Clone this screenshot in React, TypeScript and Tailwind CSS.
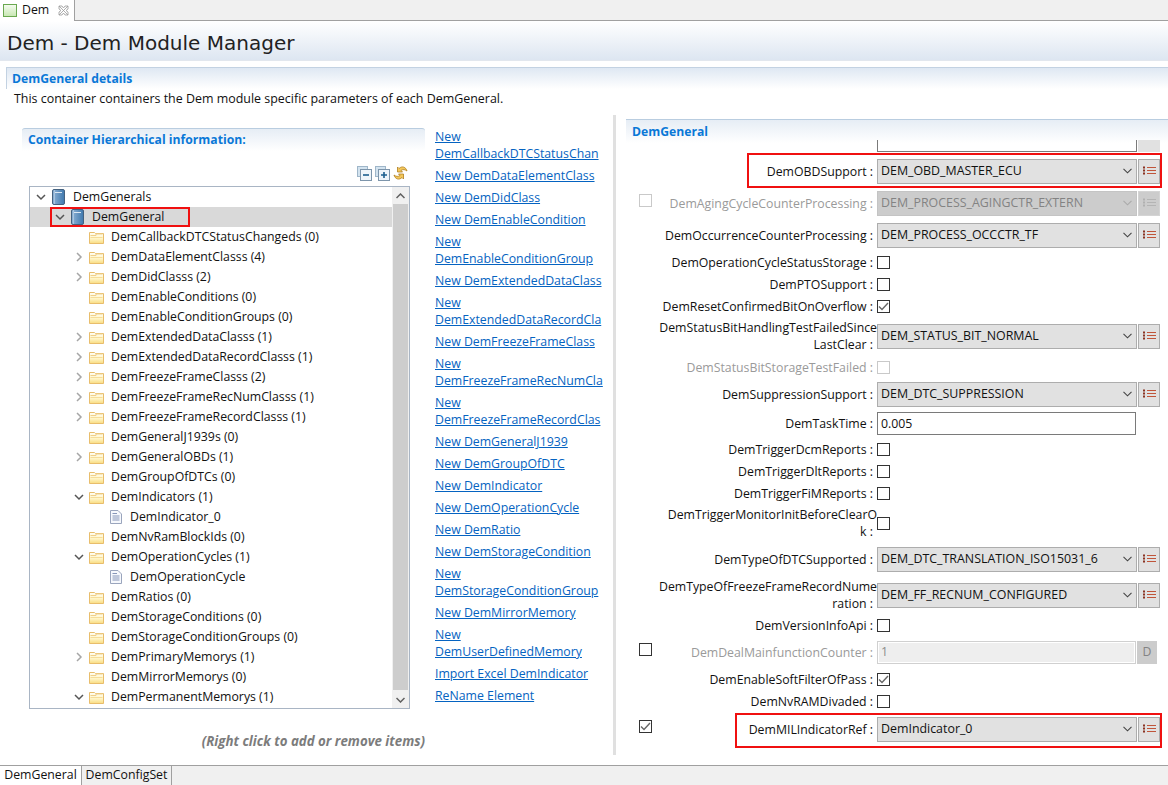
import React from "react";

const FONT = "font-['Open_Sans','Noto_Sans',sans-serif]";

const Chevron = ({ open }: { open: boolean }) => (
  <svg width="10" height="10" viewBox="0 0 10 10" className="shrink-0">
    {open ? (
      <path d="M1 3 L5 7 L9 3" fill="none" stroke="#555" strokeWidth="1.5" />
    ) : (
      <path d="M3 1 L7 5 L3 9" fill="none" stroke="#a6a6a6" strokeWidth="1.5" />
    )}
  </svg>
);

const Folder = () => (
  <svg width="15" height="13" viewBox="0 0 15 13" className="shrink-0">
    <defs>
      <linearGradient id="fg" x1="0" y1="0" x2="0" y2="1">
        <stop offset="0" stopColor="#fffef6" />
        <stop offset="0.55" stopColor="#fff5c8" />
        <stop offset="1" stopColor="#f9dc80" />
      </linearGradient>
    </defs>
    <path d="M0.5 12.5 V1.5 H5.5 L6.5 2.5 H14.5 V12.5 Z" fill="url(#fg)" stroke="#e8bd6c" />
    <path d="M1.5 4.5 H7 V3 H13.5" fill="none" stroke="#f0d08c" />
    <path d="M1.5 6.5 H13.5" stroke="#f6dd9a" />
  </svg>
);

const Book = () => (
  <svg width="13" height="16" viewBox="0 0 13 16" className="shrink-0">
    <defs>
      <linearGradient id="bk" x1="0" y1="0" x2="1" y2="0">
        <stop offset="0" stopColor="#8fb3d6" />
        <stop offset="1" stopColor="#3f78ad" />
      </linearGradient>
    </defs>
    <rect x="0.5" y="0.5" width="12" height="15" rx="1.5" fill="url(#bk)" stroke="#44617f" />
    <path d="M3 3.5 H10" stroke="#dce8f3" />
    <path d="M2.5 1 V15" stroke="#c4d8ea" strokeOpacity="0.6" />
  </svg>
);

const Doc = () => (
  <svg width="12" height="14" viewBox="0 0 12 14" className="shrink-0">
    <path d="M0.5 0.5 H8 L11.5 4 V13.5 H0.5 Z" fill="#f6f8fc" stroke="#9aa5bd" />
    <path d="M2.5 3.5 H7 M2.5 6 H9.5 M2.5 8 H9.5 M2.5 10 H9.5" stroke="#8796b8" />
  </svg>
);

const ListIcon = ({ dim }: { dim?: boolean }) => (
  <svg width="13" height="10" viewBox="0 0 13 10">
    <path d="M0 1.5 H2 M0 4.5 H2 M0 7.5 H2" stroke={dim ? "#b0b0b0" : "#8a3322"} strokeWidth="2" />
    <path d="M4 1.5 H13 M4 4.5 H13 M4 7.5 H13" stroke={dim ? "#b4b4b4" : "#c0553a"} strokeWidth="1" />
  </svg>
);

const ComboChevron = ({ dim }: { dim?: boolean }) => (
  <svg width="9" height="6" viewBox="0 0 9 6">
    <path d="M0.5 0.8 L4.5 4.8 L8.5 0.8" fill="none" stroke={dim ? "#aaa" : "#444"} strokeWidth="1.1" />
  </svg>
);

const Check = () => (
  <svg width="11" height="9" viewBox="0 0 11 9">
    <path d="M1 4.5 L4 7.5 L10 1" fill="none" stroke="#666" strokeWidth="1.4" />
  </svg>
);

const Box = ({ on, dim }: { on?: boolean; dim?: boolean }) => (
  <div
    className={`flex h-[13px] w-[13px] shrink-0 items-center justify-center border bg-white ${
      dim ? "border-[#c9c9c9]" : "border-[#333333]"
    }`}
  >
    {on && <Check />}
  </div>
);

type Tree = { t: string; lv: number; c?: "o" | "c"; k?: "f" | "b" | "d" };
const tree: Tree[] = [
  { t: "DemGenerals", lv: 0, c: "o", k: "b" },
  { t: "DemGeneral", lv: 1, c: "o", k: "b" },
  { t: "DemCallbackDTCStatusChangeds (0)", lv: 2 },
  { t: "DemDataElementClasss (4)", lv: 2, c: "c" },
  { t: "DemDidClasss (2)", lv: 2, c: "c" },
  { t: "DemEnableConditions (0)", lv: 2 },
  { t: "DemEnableConditionGroups (0)", lv: 2 },
  { t: "DemExtendedDataClasss (1)", lv: 2, c: "c" },
  { t: "DemExtendedDataRecordClasss (1)", lv: 2, c: "c" },
  { t: "DemFreezeFrameClasss (2)", lv: 2, c: "c" },
  { t: "DemFreezeFrameRecNumClasss (1)", lv: 2, c: "c" },
  { t: "DemFreezeFrameRecordClasss (1)", lv: 2, c: "c" },
  { t: "DemGeneralJ1939s (0)", lv: 2 },
  { t: "DemGeneralOBDs (1)", lv: 2, c: "c" },
  { t: "DemGroupOfDTCs (0)", lv: 2 },
  { t: "DemIndicators (1)", lv: 2, c: "o" },
  { t: "DemIndicator_0", lv: 3, k: "d" },
  { t: "DemNvRamBlockIds (0)", lv: 2 },
  { t: "DemOperationCycles (1)", lv: 2, c: "o" },
  { t: "DemOperationCycle", lv: 3, k: "d" },
  { t: "DemRatios (0)", lv: 2 },
  { t: "DemStorageConditions (0)", lv: 2 },
  { t: "DemStorageConditionGroups (0)", lv: 2 },
  { t: "DemPrimaryMemorys (1)", lv: 2, c: "c" },
  { t: "DemMirrorMemorys (0)", lv: 2 },
  { t: "DemPermanentMemorys (1)", lv: 2, c: "o" },
];

const links: string[][] = [
  ["New", "DemCallbackDTCStatusChan"],
  ["New DemDataElementClass"],
  ["New DemDidClass"],
  ["New DemEnableCondition"],
  ["New", "DemEnableConditionGroup"],
  ["New DemExtendedDataClass"],
  ["New", "DemExtendedDataRecordCla"],
  ["New DemFreezeFrameClass"],
  ["New", "DemFreezeFrameRecNumCla"],
  ["New", "DemFreezeFrameRecordClas"],
  ["New DemGeneralJ1939"],
  ["New DemGroupOfDTC"],
  ["New DemIndicator"],
  ["New DemOperationCycle"],
  ["New DemRatio"],
  ["New DemStorageCondition"],
  ["New", "DemStorageConditionGroup"],
  ["New DemMirrorMemory"],
  ["New", "DemUserDefinedMemory"],
  ["Import Excel DemIndicator"],
  ["ReName Element"],
];

const Combo = ({ v, dim }: { v: string; dim?: boolean }) => (
  <>
    <div
      className={`flex h-[25px] w-[260px] shrink-0 items-center justify-between border pl-[3px] pr-[4px] text-[12.4px] ${
        dim ? "border-[#c4c4c4] bg-[#cccccc] text-[#838383]" : "border-[#adadad] bg-[#e1e1e1] text-[#111]"
      }`}
    >
      <span className="pt-[1px]">{v}</span>
      <ComboChevron dim={dim} />
    </div>
    <div
      className={`ml-[1px] flex h-[25px] w-[22px] shrink-0 items-center justify-center border ${
        dim ? "border-[#d4d4d4] bg-[#cccccc]" : "border-[#adadad] bg-[#e1e1e1]"
      }`}
    >
      <ListIcon dim={dim} />
    </div>
  </>
);

const Label = ({ children, dim }: { children: React.ReactNode; dim?: boolean }) => (
  <div
    className={`w-[225px] shrink-0 whitespace-nowrap pr-[4px] text-right leading-[17px] ${
      dim ? "text-[#9a9a9a]" : "text-[#111]"
    }`}
  >
    {children}
  </div>
);

const Wide = ({ children }: { children: React.ReactNode }) => (
  <span className="-mr-[4px] inline-block">{children}</span>
);

const Row = ({
  h,
  children,
  left,
}: {
  h: string;
  children: React.ReactNode;
  left?: React.ReactNode;
}) => (
  <div className={`flex items-center ${h}`}>
    <div className="mb-[6px] flex w-[13px] shrink-0 items-center justify-start">{left}</div>
    {children}
  </div>
);

export default function App() {
  return (
    <div className={`flex h-[785px] w-[1168px] flex-col overflow-hidden bg-white text-[12.3px] text-[#111] ${FONT}`}>
      {/* editor tab bar */}
      <div className="flex h-[21px] shrink-0 border-b border-[#a0a0a0] bg-[#f0f0f0]">
        <div className="flex h-[21px] w-[75px] items-center border-r border-[#a0a0a0] bg-white pl-[3px]">
          <div className="h-[13px] w-[14px] border border-[#6aa84f] bg-gradient-to-b from-[#f4fbee] to-[#c9e8b4]" />
          <span className="ml-[5px]">Dem</span>
          <svg width="11" height="11" viewBox="0 0 11 11" className="ml-[9px]">
            <path d="M1 1 L10 10 M10 1 L1 10 M1 1 H4 L5.5 3 L7 1 H10 V4 L8 5.5 L10 7 V10 H7 L5.5 8 L4 10 H1 V7 L3 5.5 L1 4 Z" fill="none" stroke="#9a9a9a" strokeWidth="0.8" />
          </svg>
        </div>
      </div>

      {/* title */}
      <div className="flex h-[40px] shrink-0 items-center border-b border-[#e2e7ee] bg-gradient-to-b from-white to-[#dde6f1] pl-[7px] pt-[5px] font-['DejaVu_Sans',sans-serif] text-[20px] text-[#222]">
        Dem - Dem Module Manager
      </div>

      {/* details header */}
      <div className="ml-[6px] mt-[6px] h-[22px] shrink-0 border-l border-t border-[#c3d2e2] bg-gradient-to-b from-[#dfe8f3] to-white pl-[5px] text-[12.2px] font-bold leading-[22px] text-[#0a78d7]">
        DemGeneral details
      </div>
      <div className="h-[30px] shrink-0 pl-[14px] pt-[1px] text-[12.45px] leading-[17px]">
        This container containers the Dem module specific parameters of each DemGeneral.
      </div>

      {/* body */}
      <div className="flex min-h-0 flex-1">
        {/* left */}
        <div className="w-[435px] shrink-0 pl-[22px] pt-[9px]">
          <div className="flex h-[23px] w-[403px] items-center rounded-t-[3px] border-t border-[#b9cde0] bg-gradient-to-b from-[#e6edf5] to-white pl-[6px] text-[12.2px] font-bold text-[#0a78d7]">
            Container Hierarchical information:
          </div>
          <div className="flex h-[35px] w-[388px] items-center justify-end gap-[3px] pr-[2px] pt-[9px]">
            <svg width="15" height="15" viewBox="0 0 15 15">
              <rect x="0.5" y="0.5" width="10" height="10" fill="#d3e3ef" stroke="#9fb6c9" />
              <rect x="3.5" y="3.5" width="11" height="11" fill="#eef5fa" stroke="#7d95ab" />
              <path d="M6 9 H12" stroke="#1c5f8f" strokeWidth="1.6" />
            </svg>
            <svg width="15" height="15" viewBox="0 0 15 15">
              <rect x="0.5" y="0.5" width="10" height="10" fill="#d3e3ef" stroke="#9fb6c9" />
              <rect x="3.5" y="3.5" width="11" height="11" fill="#eef5fa" stroke="#7d95ab" />
              <path d="M6 9 H12 M9 6 V12" stroke="#1c5f8f" strokeWidth="1.6" />
            </svg>
            <svg width="15" height="16" viewBox="0 0 15 16">
              <path d="M14 6 C13 2 9 0.5 6 3.5 L4.5 2 V7 H9.5 L8 5.5 C10 4 12 4.5 14 6 Z" fill="#f4c75a" stroke="#b07f1e" strokeWidth="0.8" />
              <path d="M1 10 C2 14 6 15.5 9 12.5 L10.5 14 V9 H5.5 L7 10.5 C5 12 3 11.5 1 10 Z" fill="#f4c75a" stroke="#b07f1e" strokeWidth="0.8" />
            </svg>
          </div>
          <div className="ml-[7px] flex h-[523px] w-[381px] border border-[#a9b5c4]">
            <div className="min-w-0 flex-1 overflow-hidden">
              {tree.map((r) => (
                <div
                  key={r.t}
                  className={`flex h-[20px] items-center ${r.t === "DemGeneral" ? "bg-[#d9d9d9]" : ""}`}
                  style={{ paddingLeft: [5, 24, 43, 62][r.lv] }}
                >
                  <div className="flex w-[12px] shrink-0 items-center justify-center">
                    {r.c && <Chevron open={r.c === "o"} />}
                  </div>
                  <div className="ml-[4px] flex w-[15px] shrink-0 items-center justify-center">
                    {r.k === "b" ? <Book /> : r.k === "d" ? <Doc /> : <Folder />}
                  </div>
                  <span className="ml-[7px] whitespace-nowrap">{r.t}</span>
                </div>
              ))}
            </div>
            <div className="flex w-[17px] shrink-0 flex-col items-center bg-[#f0f0f0]">
              <div className="flex h-[17px] shrink-0 items-center justify-center">
                <svg width="9" height="6" viewBox="0 0 9 6"><path d="M0.5 5 L4.5 1 L8.5 5" fill="none" stroke="#606060" strokeWidth="1.5" /></svg>
              </div>
              <div className="h-[486px] w-[15px] bg-[#cdcdcd]" />
              <div className="mt-auto flex h-[17px] shrink-0 items-center justify-center">
                <svg width="9" height="6" viewBox="0 0 9 6"><path d="M0.5 1 L4.5 5 L8.5 1" fill="none" stroke="#606060" strokeWidth="1.5" /></svg>
              </div>
            </div>
          </div>
          <div className="w-[403px] pt-[24px] text-right text-[13.3px] font-bold italic leading-[17px] text-[#7c7c7c]">
            (Right click to add or remove items)
          </div>
        </div>

        {/* links */}
        <div className="w-[168px] shrink-0 overflow-hidden pt-[9px]">
          {links.map((l) => (
            <div key={l.join()} className="mb-[5px] whitespace-nowrap leading-[17px] text-[#0563c1] underline">
              {l.map((s, i) => (
                <div key={i} className="overflow-hidden">{s}</div>
              ))}
            </div>
          ))}
        </div>

        {/* sash */}
        <div className="-mt-[4px] ml-[10px] h-[640px] w-[3px] shrink-0 bg-[#e0e0e0]" />

        {/* right */}
        <div className="ml-[10px] min-w-0 flex-1">
          <div className="h-[24px] border-t border-[#b9cde0] bg-gradient-to-b from-[#e6edf5] to-white pl-[6px] text-[12.2px] font-bold leading-[23px] text-[#0a78d7]">
            DemGeneral
          </div>
          <div className="relative pl-[13px]">
            <div className="-mt-[3px] mb-[3px] ml-[238px] flex h-[12px] items-end">
              <div className="h-[12px] w-[260px] border border-t-0 border-[#7a7a7a]" />
              <div className="ml-[1px] h-[12px] w-[22px] bg-[#e1e1e1]" />
            </div>
            <Row h="h-[32px]"><Label>DemOBDSupport :</Label><Combo v="DEM_OBD_MASTER_ECU" /></Row>
            <Row h="h-[32px]" left={<Box dim />}><Label dim>DemAgingCycleCounterProcessing :</Label><Combo dim v="DEM_PROCESS_AGINGCTR_EXTERN" /></Row>
            <Row h="h-[32px]"><Label>DemOccurrenceCounterProcessing :</Label><Combo v="DEM_PROCESS_OCCCTR_TF" /></Row>
            <Row h="h-[22px]"><Label>DemOperationCycleStatusStorage :</Label><Box /></Row>
            <Row h="h-[22px]"><Label>DemPTOSupport :</Label><Box /></Row>
            <Row h="h-[22px]"><Label>DemResetConfirmedBitOnOverflow :</Label><Box on /></Row>
            <Row h="h-[38px]"><Label><Wide>DemStatusBitHandlingTestFailedSince</Wide><br />LastClear :</Label><Combo v="DEM_STATUS_BIT_NORMAL" /></Row>
            <Row h="h-[24px]"><Label dim>DemStatusBitStorageTestFailed :</Label><Box dim /></Row>
            <Row h="h-[30px]"><Label>DemSuppressionSupport :</Label><Combo v="DEM_DTC_SUPPRESSION" /></Row>
            <Row h="h-[29px]">
              <Label>DemTaskTime :</Label>
              <div className="flex h-[23px] w-[259px] items-center border border-[#7a7a7a] bg-white pl-[3px] pt-[1px]">0.005</div>
            </Row>
            <Row h="h-[22px]"><Label>DemTriggerDcmReports :</Label><Box /></Row>
            <Row h="h-[22px]"><Label>DemTriggerDltReports :</Label><Box /></Row>
            <Row h="h-[22px]"><Label>DemTriggerFiMReports :</Label><Box /></Row>
            <Row h="h-[38px]"><Label><Wide>DemTriggerMonitorInitBeforeClearO</Wide><br />k :</Label><Box /></Row>
            <Row h="h-[34px]"><Label>DemTypeOfDTCSupported :</Label><Combo v="DEM_DTC_TRANSLATION_ISO15031_6" /></Row>
            <Row h="h-[38px]"><Label><Wide>DemTypeOfFreezeFrameRecordNume</Wide><br />ration :</Label><Combo v="DEM_FF_RECNUM_CONFIGURED" /></Row>
            <Row h="h-[22px]"><Label>DemVersionInfoApi :</Label><Box /></Row>
            <Row h="h-[32px]" left={<Box />}>
              <Label dim>DemDealMainfunctionCounter :</Label>
              <div className="flex h-[23px] w-[259px] items-center border border-[#d0d0d0] bg-[#eeeeee] pl-[3px] text-[#8c8c8c] ring-1 ring-inset ring-white">1</div>
              <div className="ml-[1px] flex h-[23px] w-[20px] items-center justify-center bg-[#cccccc] text-[#838383]">D</div>
            </Row>
            <Row h="h-[22px]"><Label>DemEnableSoftFilterOfPass :</Label><Box on /></Row>
            <Row h="h-[22px]"><Label>DemNvRAMDivaded :</Label><Box /></Row>
            <Row h="h-[34px]" left={<Box on />}><Label>DemMILIndicatorRef :</Label><Combo v="DemIndicator_0" /></Row>
          </div>
        </div>
      </div>

      {/* bottom tabs */}
      <div className="flex h-[20px] shrink-0 border-t border-[#a0a0a0] bg-[#f0f0f0]">
        <div className="flex w-[81px] items-center justify-center bg-white">DemGeneral</div>
        <div className="flex w-[91px] items-center justify-center border-l border-r border-[#a0a0a0]">DemConfigSet</div>
      </div>

      {/* annotation rectangles */}
      <div className="absolute left-[50px] top-[207px] h-[20px] w-[140px] border-2 border-[#f01010]" />
      <div className="absolute left-[747px] top-[153px] h-[35px] w-[415px] border-2 border-[#f01010]" />
      <div className="absolute left-[735px] top-[713px] h-[35px] w-[427px] border-2 border-[#f01010]" />
    </div>
  );
}
